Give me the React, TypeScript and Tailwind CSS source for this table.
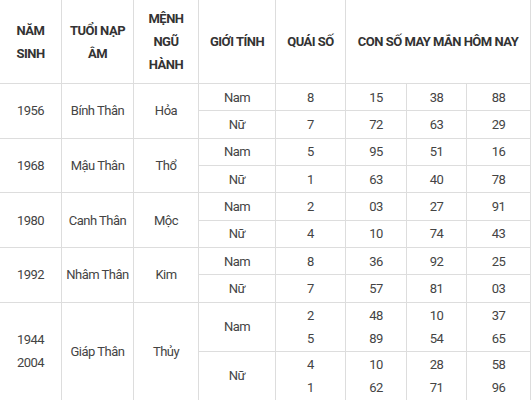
import clsx from "clsx";

type Row = {
  gender: string;
  quai: string[];
  nums: string[][];
};

type Group = {
  years: string[];
  tuoi: string;
  menh: string;
  rows: Row[];
};

const groups: Group[] = [
  {
    years: ["1956"],
    tuoi: "Bính Thân",
    menh: "Hỏa",
    rows: [
      { gender: "Nam", quai: ["8"], nums: [["15"], ["38"], ["88"]] },
      { gender: "Nữ", quai: ["7"], nums: [["72"], ["63"], ["29"]] },
    ],
  },
  {
    years: ["1968"],
    tuoi: "Mậu Thân",
    menh: "Thổ",
    rows: [
      { gender: "Nam", quai: ["5"], nums: [["95"], ["51"], ["16"]] },
      { gender: "Nữ", quai: ["1"], nums: [["63"], ["40"], ["78"]] },
    ],
  },
  {
    years: ["1980"],
    tuoi: "Canh Thân",
    menh: "Mộc",
    rows: [
      { gender: "Nam", quai: ["2"], nums: [["03"], ["27"], ["91"]] },
      { gender: "Nữ", quai: ["4"], nums: [["10"], ["74"], ["43"]] },
    ],
  },
  {
    years: ["1992"],
    tuoi: "Nhâm Thân",
    menh: "Kim",
    rows: [
      { gender: "Nam", quai: ["8"], nums: [["36"], ["92"], ["25"]] },
      { gender: "Nữ", quai: ["7"], nums: [["57"], ["81"], ["03"]] },
    ],
  },
  {
    years: ["1944", "2004"],
    tuoi: "Giáp Thân",
    menh: "Thủy",
    rows: [
      {
        gender: "Nam",
        quai: ["2", "5"],
        nums: [
          ["48", "89"],
          ["10", "54"],
          ["37", "65"],
        ],
      },
      {
        gender: "Nữ",
        quai: ["4", "1"],
        nums: [
          ["10", "62"],
          ["28", "71"],
          ["58", "96"],
        ],
      },
    ],
  },
];

const cell = "border border-[#dddddd] text-center align-middle px-1 py-0";

function Lines({ items }: { items: string[] }) {
  return (
    <>
      {items.map((t, i) => (
        <div key={i}>{t}</div>
      ))}
    </>
  );
}

export default function App() {
  return (
    <div
      className="w-[532px] h-[400px] overflow-hidden bg-white"
      style={{ fontFamily: "Roboto, 'Liberation Sans', sans-serif" }}
    >
      <table className="table-fixed border-collapse w-[531px] -ml-px -mt-px text-[13px] leading-[23px] tracking-[-0.5px] text-[#444]">
        <colgroup>
          <col className="w-[62px]" />
          <col className="w-[72px]" />
          <col className="w-[65px]" />
          <col className="w-[77px]" />
          <col className="w-[70px]" />
          <col className="w-[61px]" />
          <col className="w-[60px]" />
          <col className="w-[64px]" />
        </colgroup>
        <thead>
          <tr className="h-[84px] font-bold text-[#333]">
            <th className={clsx(cell, "px-3")}>NĂM SINH</th>
            <th className={clsx(cell, "px-1")}>TUỔI NẠP ÂM</th>
            <th className={clsx(cell, "px-2")}>MỆNH NGŨ HÀNH</th>
            <th className={cell}>GIỚI TÍNH</th>
            <th className={cell}>QUÁI SỐ</th>
            <th className={cell} colSpan={3}>
              CON SỐ MAY MẮN HÔM NAY
            </th>
          </tr>
        </thead>
        <tbody>
          {groups.map((g) =>
            g.rows.map((r, ri) => {
              const tall = r.quai.length > 1;
              return (
                <tr
                  key={g.tuoi + r.gender}
                  className={tall ? "h-[49px]" : "h-[27.33px]"}
                >
                  {ri === 0 && (
                    <>
                      <td className={cell} rowSpan={2}>
                        <Lines items={g.years} />
                      </td>
                      <td className={clsx(cell, "whitespace-nowrap")} rowSpan={2}>
                        {g.tuoi}
                      </td>
                      <td className={cell} rowSpan={2}>
                        {g.menh}
                      </td>
                    </>
                  )}
                  <td className={cell}>{r.gender}</td>
                  <td className={cell}>
                    <Lines items={r.quai} />
                  </td>
                  {r.nums.map((n, ni) => (
                    <td key={ni} className={cell}>
                      <Lines items={n} />
                    </td>
                  ))}
                </tr>
              );
            })
          )}
        </tbody>
      </table>
    </div>
  );
}
